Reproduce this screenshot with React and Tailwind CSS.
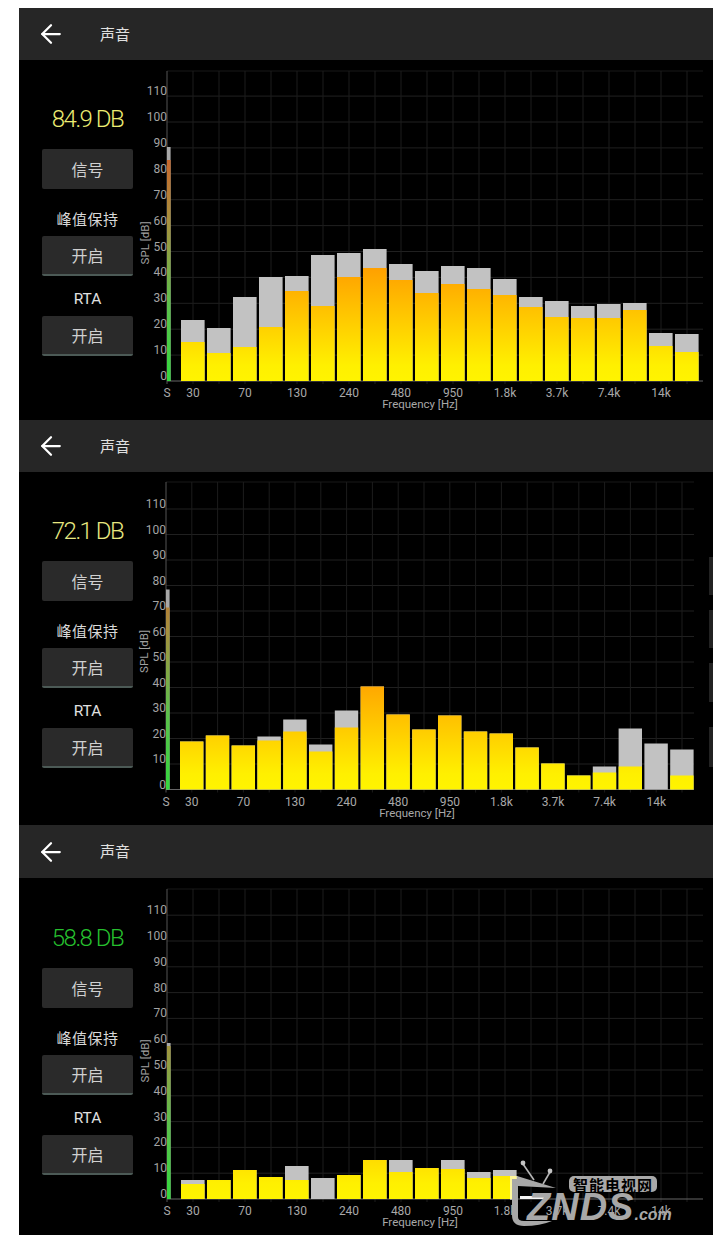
import React from "react";
import { ArrowLeft } from "lucide-react";

const TICKS = [0, 10, 20, 30, 40, 50, 60, 70, 80, 90, 100, 110];
const LABELS = ["S", "30", "70", "130", "240", "480", "950", "1.8k", "3.7k", "7.4k", "14k"];

// each bar is [peak height, live height] in px above the baseline, unit is px per 10 dB
const panels = [
  {
    id: "a",
    headerH: "h-[52px]",
    bodyH: "h-[360px]",
    reading: "84.9 DB",
    readingColor: "text-[#ecec72]",
    shift: "ml-0",
    readingMt: "mt-[44px]",
    axisX: 34,
    pitch: 26,
    baseY: 321,
    unit: 25.9,
    topY: 11,
    right: 570,
    sPeak: 234,
    sLive: 221,
    freqX: 287,
    bars: [
      [61, 39], [53, 28], [84, 34], [104, 54], [105, 90], [126, 75], [128, 104], [132, 113], [117, 101], [110, 88],
      [115, 97], [113, 92], [102, 86], [84, 74], [80, 64], [75, 63], [77, 63], [78, 71], [48, 35], [47, 29],
    ],
  },
  {
    id: "b",
    headerH: "h-[52px]",
    bodyH: "h-[353px]",
    reading: "72.1 DB",
    readingColor: "text-[#e8e880]",
    shift: "-ml-[1px]",
    readingMt: "mt-[44px]",
    axisX: 33,
    pitch: 25.8,
    baseY: 317.5,
    unit: 25.5,
    topY: 10,
    right: 561,
    sPeak: 200,
    sLive: 182,
    freqX: 284,
    tabs: true,
    bars: [
      [48, 48], [54, 54], [44, 44], [53, 49], [70, 58], [45, 38], [79, 62], [103, 103], [75, 75], [60, 60],
      [74, 74], [58, 58], [56, 56], [42, 42], [26, 26], [14, 14], [23, 17], [61, 23], [46, 0], [40, 14],
    ],
  },
  {
    id: "c",
    headerH: "h-[53px]",
    bodyH: "h-[357px]",
    reading: "58.8 DB",
    readingColor: "text-[#26bf2e]",
    shift: "ml-0",
    readingMt: "mt-[45px]",
    axisX: 34,
    pitch: 26,
    baseY: 321,
    unit: 25.8,
    topY: 11,
    right: 570,
    sPeak: 156,
    sLive: 153,
    freqX: 287,
    watermark: true,
    bars: [
      [19, 15], [19, 19], [29, 29], [22, 22], [33, 19], [21, 0], [24, 24], [39, 39], [39, 27], [31, 31],
      [39, 30], [27, 21], [29, 23],
    ],
  },
];

const Spectrum = ({ p }) => {
  const { axisX, pitch, baseY, unit, topY, right, bars } = p;
  const firstGrid = axisX + pitch;
  const count = Math.floor((right - axisX) / pitch);
  const verticals = Array.from({ length: count }, (_, i) => firstGrid + i * pitch);
  const sTop = baseY - p.sPeak;
  const sLiveTop = baseY - p.sLive;
  const tickY = (t) => baseY - (t / 10) * unit;

  return (
    <svg width="580" className="h-full shrink-0" style={{ fontFamily: "Roboto, sans-serif" }}>
      <defs>
        <linearGradient id={`bar-${p.id}`} gradientUnits="userSpaceOnUse" x1="0" x2="0" y1={baseY} y2={baseY - 130}>
          <stop offset="0" stopColor="#fff400" />
          <stop offset="0.12" stopColor="#fff000" />
          <stop offset="1" stopColor="#ff9200" />
        </linearGradient>
        <linearGradient id={`s-${p.id}`} gradientUnits="userSpaceOnUse" x1="0" x2="0" y1={baseY} y2={baseY - 220}>
          <stop offset="0" stopColor="#33d83e" />
          <stop offset="0.35" stopColor="#5cc04c" />
          <stop offset="0.7" stopColor="#a3943f" />
          <stop offset="1" stopColor="#c8682c" />
        </linearGradient>
      </defs>

      {/* grid */}
      <line x1={axisX} x2={right} y1={topY} y2={topY} stroke="#181818" />
      {TICKS.slice(1).map((t) => (
        <line key={t} x1={axisX} x2={right} y1={tickY(t)} y2={tickY(t)} stroke="#202020" />
      ))}
      {verticals.map((x) => (
        <line key={x} x1={x} x2={x} y1={topY} y2={baseY + 3} stroke="#1c1c1c" />
      ))}
      <line x1={axisX} x2={axisX} y1={topY} y2={baseY + 3} stroke="#555" />
      <line x1={axisX} x2={right} y1={baseY} y2={baseY} stroke="#666" />

      {/* signal bar */}
      <rect x={axisX} y={sTop} width="3.6" height={p.sPeak} fill="#a8a8a8" />
      <rect x={axisX} y={sLiveTop} width="3.6" height={p.sLive} fill={`url(#s-${p.id})`} />

      {/* band bars */}
      {bars.map(([peak, live], i) => {
        const x = axisX + 14 + i * pitch;
        return (
          <g key={i}>
            <rect x={x} y={baseY - peak} width={pitch - 2.4} height={peak} fill="#c2c2c2" />
            {live > 0 && <rect x={x} y={baseY - live} width={pitch - 2.4} height={live} fill={`url(#bar-${p.id})`} />}
          </g>
        );
      })}

      {/* axis text */}
      {TICKS.map((t) => (
        <text key={t} x={axisX} y={tickY(t)} dy="-1" textAnchor="end" fontSize="12" fill="#a4a4a4">
          {t}
        </text>
      ))}
      {LABELS.map((label, i) => (
        <text
          key={label}
          x={i === 0 ? axisX : axisX + pitch + (i - 1) * pitch * 2}
          y={baseY + 16}
          textAnchor="middle"
          fontSize="12"
          fill="#a8a8a8"
        >
          {label}
        </text>
      ))}
      <text x={p.freqX} y={baseY + 27} textAnchor="middle" fontSize="11.5" fill="#a8a8a8">
        Frequency [Hz]
      </text>
      <text
        x={axisX - 22}
        y={baseY - 138}
        dy="4"
        textAnchor="middle"
        fontSize="11.5"
        fill="#a0a0a0"
        transform={`rotate(-90 ${axisX - 22} ${baseY - 138})`}
      >
        SPL [dB]
      </text>
    </svg>
  );
};

const Watermark = () => (
  <div className="absolute bottom-[8px] left-[491px] h-[68px] w-[166px]">
    <svg width="166" height="68" className="absolute left-0 top-0">
      <rect x="0" y="17" width="8" height="24" fill="#fff" opacity="0.6" />
      <line x1="13" y1="5" x2="24" y2="21" stroke="#b5b5b5" strokeWidth="1.6" />
      <circle cx="13" cy="4" r="2.4" fill="#c4c4c4" />
      <line x1="40" y1="13" x2="33" y2="25" stroke="#b5b5b5" strokeWidth="1.6" />
      <circle cx="40" cy="12" r="2.4" fill="#c4c4c4" />
      <path d="M7 17 L46 29 L8 27 Z" fill="#a8a8a8" />
      <path d="M2 20 L8 20 L8 58 Q8 62 14 62 L42 62 Q30 67 14 67 Q2 67 2 56 Z" fill="#a8a8a8" />
      <rect x="10" y="37" width="24" height="3" fill="#f4f4f4" />
    </svg>
    <div className="absolute left-[59px] top-[17px] flex h-[16px] w-[88px] items-center justify-center rounded-[5px] bg-[#a8a8a8] font-['Noto_Sans_CJK_SC',sans-serif] text-[15px] font-bold leading-none tracking-[1px] text-black">
      智能电视网
    </div>
    <div className="absolute left-[17px] top-[29px] flex items-baseline font-['Liberation_Sans',sans-serif] font-bold italic leading-none text-[#a8a8a8]">
      <span className="text-[38px] tracking-[1px]">ZNDS</span>
      <span className="text-[16px]">.com</span>
    </div>
  </div>
);

const SideButton = ({ children, underlined }) => (
  <div
    className={`flex h-10 w-[91px] items-center justify-center rounded-[2px] bg-[#2a2a2a] font-['Noto_Sans_CJK_SC',sans-serif] text-[16px] text-[#d0d0d0] ${
      underlined ? "border-b-2 border-[#4c5a56]" : ""
    }`}
  >
    {children}
  </div>
);

const Panel = ({ p }) => (
  <section className="relative">
    <header className={`flex items-center bg-[#262626] text-[#e0e0e0] ${p.headerH}`}>
      <div className={`ml-[17px] flex w-[64px] items-center ${p.shift}`}>
        <ArrowLeft size={30} strokeWidth={1.8} className="text-white" />
      </div>
      <span className="font-['Noto_Sans_CJK_SC',sans-serif] text-[15px]">声音</span>
    </header>
    <div className={`flex bg-black ${p.bodyH}`}>
      <div className={`ml-[23px] flex w-[91px] shrink-0 flex-col items-center ${p.shift}`}>
        <div className={`flex h-[30px] items-center whitespace-nowrap text-[24px] font-light tracking-[-1.5px] ${p.readingMt} ${p.readingColor}`}>
          {p.reading}
        </div>
        <div className="mt-[15px]">
          <SideButton>信号</SideButton>
        </div>
        <div className="mt-[18px] h-[24px] font-['Noto_Sans_CJK_TC',sans-serif] text-[15px] font-normal leading-6 tracking-[0.5px] text-[#d8d8d8]">峰值保持</div>
        <div className="mt-[5px]">
          <SideButton underlined>开启</SideButton>
        </div>
        <div className="mt-[11px] h-[24px] text-[15.5px] font-normal leading-6 text-[#e0e0e0]">RTA</div>
        <div className="mt-[5px]">
          <SideButton underlined>开启</SideButton>
        </div>
      </div>
      <Spectrum p={p} />
    </div>
    {p.tabs && (
      <div className="absolute right-0 top-[137px] flex flex-col">
        <div className="h-[38px] w-[4px] bg-[#222]" />
        <div className="mt-[15px] h-[38px] w-[4px] bg-[#222]" />
        <div className="mt-[15px] h-[39px] w-[4px] bg-[#222]" />
        <div className="mt-[25px] h-[40px] w-[4px] bg-[#222]" />
      </div>
    )}
    {p.watermark && <Watermark />}
  </section>
);

export default function App() {
  return (
    <div lang="zh-CN" className="h-[1260px] w-[720px] overflow-hidden bg-white pl-[19px] pr-[7px] pt-2 font-['Roboto','Noto_Sans_CJK_SC',sans-serif]">
      {panels.map((p) => (
        <Panel key={p.id} p={p} />
      ))}
    </div>
  );
}
